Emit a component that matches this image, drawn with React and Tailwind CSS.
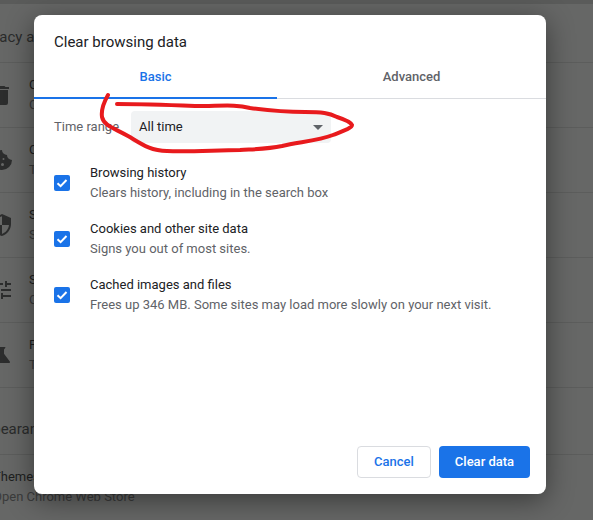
import React from 'react';

// Only the first letters of these rows show beside the dialog
const rows = [
  { top: 'Clear', sub: 'Clear', icon: 'M6 7v13a2 2 0 0 0 2 2h8a2 2 0 0 0 2-2V7H6zm13-3h-3.500l-1-1h-5l-1 1H5v2h14V4z' },
  { top: 'Cookies', sub: 'Third', icon: 'M12 2a10 10 0 1 0 10 10 5 5 0 0 1-5-5 5 5 0 0 1-5-5zM8.500 9a1.500 1.500 0 1 1 0 3 1.500 1.500 0 0 1 0-3zm-1 5a1.500 1.500 0 1 1 0 3 1.500 1.500 0 0 1 0-3zm5 1a1.500 1.500 0 1 1 0 3 1.500 1.500 0 0 1 0-3zm1-5a1 1 0 1 1 0 2 1 1 0 0 1 0-2z' },
  { top: 'Security', sub: 'Safe', icon: 'M12 1 3 5v6c0 5.500 3.800 10.700 9 12 5.200-1.300 9-6.500 9-12V5l-9-4zm0 11h7c-.5 4.100-3.300 7.800-7 8.900V12H5V6.300l7-3.100V12z' },
  { top: 'Site', sub: 'Controls', icon: 'M3 17v2h6v-2H3zM3 5v2h10V5H3zm10 16v-2h8v-2h-8v-2h-2v6h2zM7 9v2H3v2h4v2h2V9H7zm14 4v-2H11v2h10zm-6-4h2V7h4V5h-4V3h-2v6z' },
  { top: 'Privacy', sub: 'Trial', icon: 'M19.800 18.400 14 10.670V6.500l1.350-1.690c.26-.33.03-.81-.39-.81H9.040c-.42 0-.65.480-.39.810L10 6.500v4.170L4.200 18.400c-.49.660-.02 1.600.8 1.600h14c.82 0 1.290-.94.800-1.600z' },
];

const options = [
  { title: 'Browsing history', note: 'Clears history, including in the search box' },
  { title: 'Cookies and other site data', note: 'Signs you out of most sites.' },
  { title: 'Cached images and files', note: 'Frees up 346 MB. Some sites may load more slowly on your next visit.' },
];

const Checkbox = () => (
  <div className="w-4 h-4 rounded-[2px] bg-[#1a73e8] flex items-center justify-center shrink-0">
    <svg width="12" height="12" viewBox="0 0 12 12" fill="none" stroke="#fff" strokeWidth="2">
      <path d="M1.500 6.200 4.600 9.200 10.500 3" />
    </svg>
  </div>
);

export default function App() {
  return (
    <div className="relative w-[593px] h-[520px] overflow-hidden bg-[#666766] font-['Roboto',sans-serif]">
      {/* Settings page behind the dialog */}
      <div className="h-1 bg-[#5a5b5a]" />
      <div className="h-[59px] pt-[24px] -ml-[26px] text-[15px] leading-[18px] text-[#2a2b2b] border-b border-[#5c5d5c] whitespace-nowrap">
        Privacy and security
      </div>
      {rows.map((r) => (
        <div key={r.icon} className="h-[65px] flex items-center -ml-[10px] gap-[15px] border-b border-[#5c5d5c] whitespace-nowrap">
          <svg width="24" height="24" viewBox="0 0 24 24" fill="#2c2d2d" className="shrink-0">
            <path d={r.icon} />
          </svg>
          <div className="text-[13px] leading-[20px]">
            <div className="text-[#1e1f1f]">{r.top}</div>
            <div className="text-[#3a3b3b]">{r.sub}</div>
          </div>
        </div>
      ))}
      <div className="h-[67px] pt-[32px] -ml-[26px] text-[15px] leading-[18px] text-[#2a2b2b] border-b border-[#5c5d5c] whitespace-nowrap">
        Appearance
      </div>
      <div className="pt-[12px] -ml-[7px] text-[13px] leading-[20px] whitespace-nowrap">
        <div className="text-[#1e1f1f]">Themes</div>
        <div className="text-[#3a3b3b]">Open Chrome Web Store</div>
      </div>

      {/* Dialog */}
      <div className="absolute left-[34px] top-[15px] w-[512px] h-[479px] bg-white rounded-[8px] shadow-[0_6px_28px_rgba(0,0,0,0.45)] flex flex-col">
        <div className="pt-[18px] pl-[20px] text-[15px] leading-[18px] text-[#202124]">Clear browsing data</div>
        <div className="mt-[7px] flex h-[41px] border-b border-[#dadce0] text-[13px] font-medium">
          <div className="w-[243px] -mb-px pb-[2px] border-b-2 border-[#1a73e8] text-[#1a73e8] flex items-center justify-center">Basic</div>
          <div className="flex-1 pb-[2px] text-[#5f6368] flex items-center justify-center">Advanced</div>
        </div>
        <div className="mt-[12px] pl-[20px] flex items-center h-[32px]">
          <div className="w-[77px] text-[13px] text-[#5f6368]">Time range</div>
          <div className="w-[200px] h-[32px] rounded-[4px] bg-[#f1f3f4] flex items-center justify-between pl-[8px] pr-[8px] text-[13px] text-[#202124]">
            <span>All time</span>
            <svg width="10" height="5" viewBox="0 0 10 5" fill="#5f6368"><path d="M0 0h10L5 5z" /></svg>
          </div>
        </div>
        <div className="mt-[20px] pl-[20px] flex flex-col gap-[16px]">
          {options.map((o) => (
            <div key={o.title} className="flex items-center gap-[20px] h-[40px]">
              <Checkbox />
              <div className="text-[13px] leading-[20px]">
                <div className="text-[#202124]">{o.title}</div>
                <div className="text-[#5f6368]">{o.note}</div>
              </div>
            </div>
          ))}
        </div>
        <div className="mt-auto pb-[16px] pr-[16px] flex justify-end gap-[8px] text-[13px] font-medium">
          <button className="w-[74px] h-[32px] rounded-[4px] bg-white border border-[#dadce0] text-[#1a73e8]">Cancel</button>
          <button className="w-[91px] h-[32px] rounded-[4px] bg-[#1a73e8] text-white">Clear data</button>
        </div>
      </div>

      {/* Red marker scribble */}
      <svg className="absolute inset-0 pointer-events-none" width="593" height="520" viewBox="0 0 593 520" fill="none">
        <path
          d="M108 95C104 102 101 110 102 117C104 126 114 128 128 136C140 143 150 151 167 151C190 152 217 150 240 150C258 149 268 149 282 146C298 142 318 141 333 135C343 131 352 128 352 125C351 122 343 119 337 117C329 113 322 112 305 112C285 112 265 110 250 108C235 104 222 106 195 106C170 105 140 104 117 104"
          stroke="#e81a1d"
          strokeWidth="4"
          strokeLinecap="round"
          strokeLinejoin="round"
        />
      </svg>
    </div>
  );
}
